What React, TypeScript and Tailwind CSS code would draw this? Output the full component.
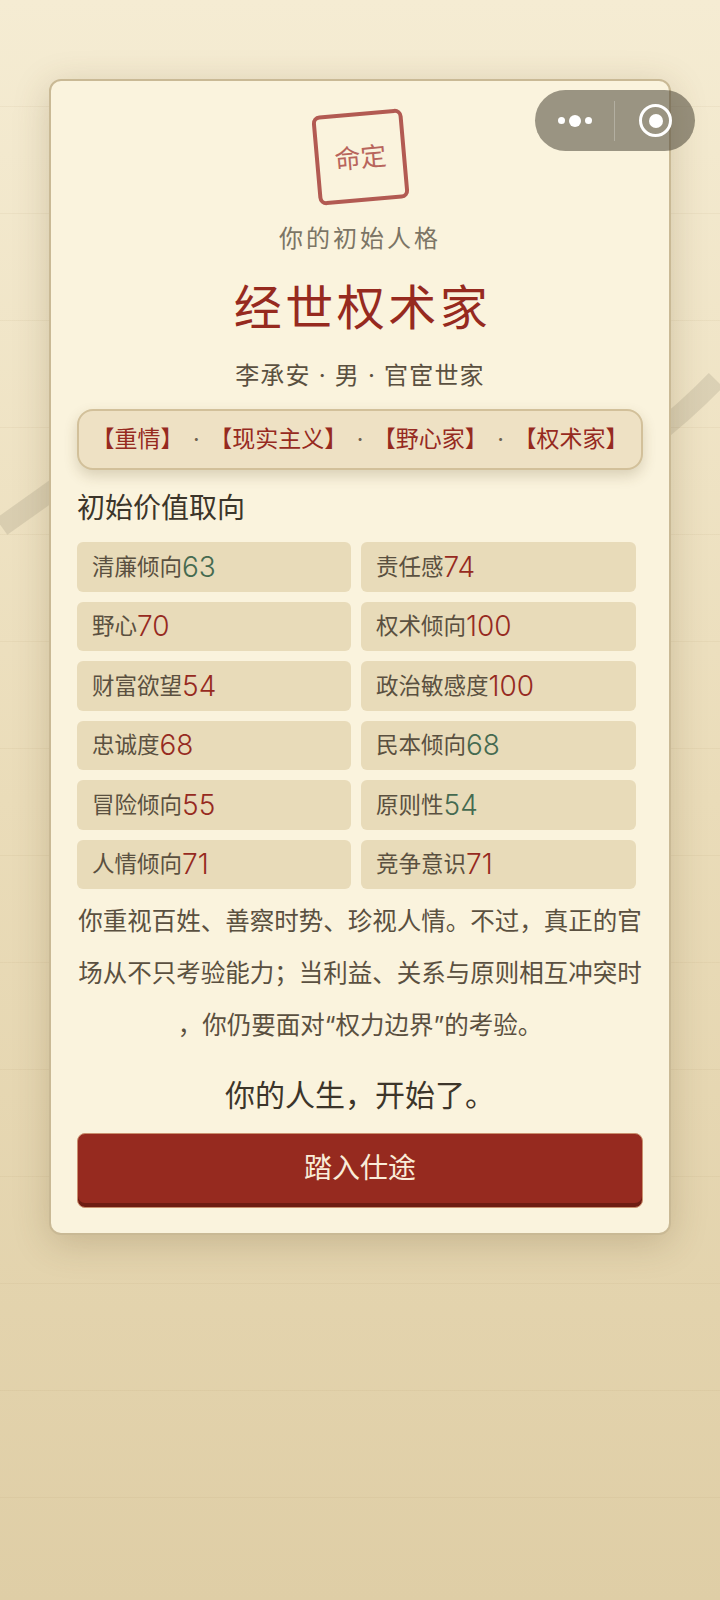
const CJK = "font-['Inter','Noto_Sans_CJK_SC',sans-serif]";

const tags = ['【重情】', '【现实主义】', '【野心家】', '【权术家】'];

const values = [
  { label: '清廉倾向', score: 63, good: true },
  { label: '责任感', score: 74 },
  { label: '野心', score: 70 },
  { label: '权术倾向', score: 100 },
  { label: '财富欲望', score: 54 },
  { label: '政治敏感度', score: 100 },
  { label: '忠诚度', score: 68 },
  { label: '民本倾向', score: 68, good: true },
  { label: '冒险倾向', score: 55 },
  { label: '原则性', score: 54, good: true },
  { label: '人情倾向', score: 71 },
  { label: '竞争意识', score: 71 },
];

function Capsule() {
  return (
    <div className="absolute left-[535px] top-[90px] flex h-[61px] w-[160px] items-center rounded-full bg-[#4a4536]/55">
      <div className="flex w-[57px] items-center justify-end gap-[4px]">
        <span className="h-[7px] w-[7px] rounded-full bg-white" />
        <span className="h-[12px] w-[12px] rounded-full bg-white" />
        <span className="h-[7px] w-[7px] rounded-full bg-white" />
      </div>
      <span className="ml-[22px] h-[40px] w-px bg-white/25" />
      <span className="ml-[24px] flex h-[33px] w-[33px] items-center justify-center rounded-full border-[3px] border-white">
        <span className="h-[14px] w-[14px] rounded-full bg-white" />
      </span>
    </div>
  );
}

export default function App() {
  return (
    <div
      className={`relative h-[1600px] w-[720px] overflow-hidden bg-[linear-gradient(180deg,#f5ecd3_0%,#eadcb9_50%,#dfcea6_100%)] pt-[79px] ${CJK}`}
    >
      {/* faint ruled lines */}
      <div className="absolute inset-0 bg-[repeating-linear-gradient(180deg,transparent_0px,transparent_106px,rgba(150,120,70,0.07)_106px,rgba(150,120,70,0.07)_107px)]" />
      {/* brush stroke behind the card */}
      <svg className="absolute inset-0" width="720" height="1600" fill="none">
        <path d="M1.5 526.7 Q 25 510 70 478" stroke="#6f6a58" strokeOpacity="0.16" strokeWidth="20" />
        <path d="M650 439 Q 685 412 716 380" stroke="#6f6a58" strokeOpacity="0.16" strokeWidth="20" />
      </svg>

      <div className="relative mx-[49px] flex h-[1156px] w-[622px] flex-col rounded-[12px] border-2 border-[#c9b995] bg-[#faf3dd] px-[26px] pt-[31px] shadow-[0_8px_36px_rgba(90,70,30,0.22)]">
        <div className="mx-auto flex h-[90px] w-[91px] -rotate-[5deg] items-center justify-center rounded-[8px] border-[4px] border-[#b25a52] text-[26px] text-[#b8655c]">
          命定
        </div>
        <p className="mt-[19px] text-center text-[24px] leading-[36px] tracking-[3px] text-[#7c7565]">
          你的初始人格
        </p>
        <h1 className="mt-[16px] pl-[5px] text-center text-[48px] leading-[70px] tracking-[3.5px] text-[#962a1f]">
          经世权术家
        </h1>
        <p className="mt-[15px] text-center text-[24px] leading-[36px] tracking-[1.2px] text-[#5a5040]">
          李承安 · 男 · 官宦世家
        </p>

        <div className="mt-[15px] flex h-[61px] items-center justify-center rounded-[16px] border-2 border-[#d2c09a] bg-[#eee1c4] text-[23px] text-[#962a1f] shadow-[0_6px_14px_rgba(90,70,30,0.2)]">
          {tags.map((tag, i) => (
            <span key={tag} className="flex items-center">
              {i > 0 && <span className="mx-[9.5px] text-[#6d6252]">·</span>}
              {tag}
            </span>
          ))}
        </div>

        <h2 className="mt-[18px] text-[28px] leading-[40px] text-[#3c352a]">初始价值取向</h2>

        <div className="mt-[14px] grid grid-cols-[274px_275px] gap-x-[10px] gap-y-[10px]">
          {values.map((v) => (
            <div key={v.label} className="flex h-[49.5px] items-center rounded-[6px] bg-[#e8dbb9] px-[15px] text-[22.5px] text-[#5a5040]">
              {v.label}
              <span className={`text-[28px] font-[350] ${v.good ? 'text-[#456a50]' : 'text-[#962a1f]'}`}>{v.score}</span>
            </div>
          ))}
        </div>

        <p className="mt-[6px] text-center text-[24.5px] leading-[52px] text-[#5a5040] [line-break:anywhere]">
          你重视百姓、善察时势、珍视人情。不过，真正的官场从不只考验能力；当利益、关系与原则相互冲突时，你仍要面对“权力边界”的考验。
        </p>

        <p className="mt-[22px] text-center text-[30px] leading-[44px] text-[#3c352a]">你的人生，开始了。</p>

        <button
          type="button"
          className="mt-[16px] h-[75px] rounded-[8px] border border-[#c98f6e] bg-[#962a1f] pb-[6px] text-[28px] text-[#f9ecd8] shadow-[inset_0_-4px_0_#6e1c12]"
        >
          踏入仕途
        </button>
      </div>

      <Capsule />
    </div>
  );
}
